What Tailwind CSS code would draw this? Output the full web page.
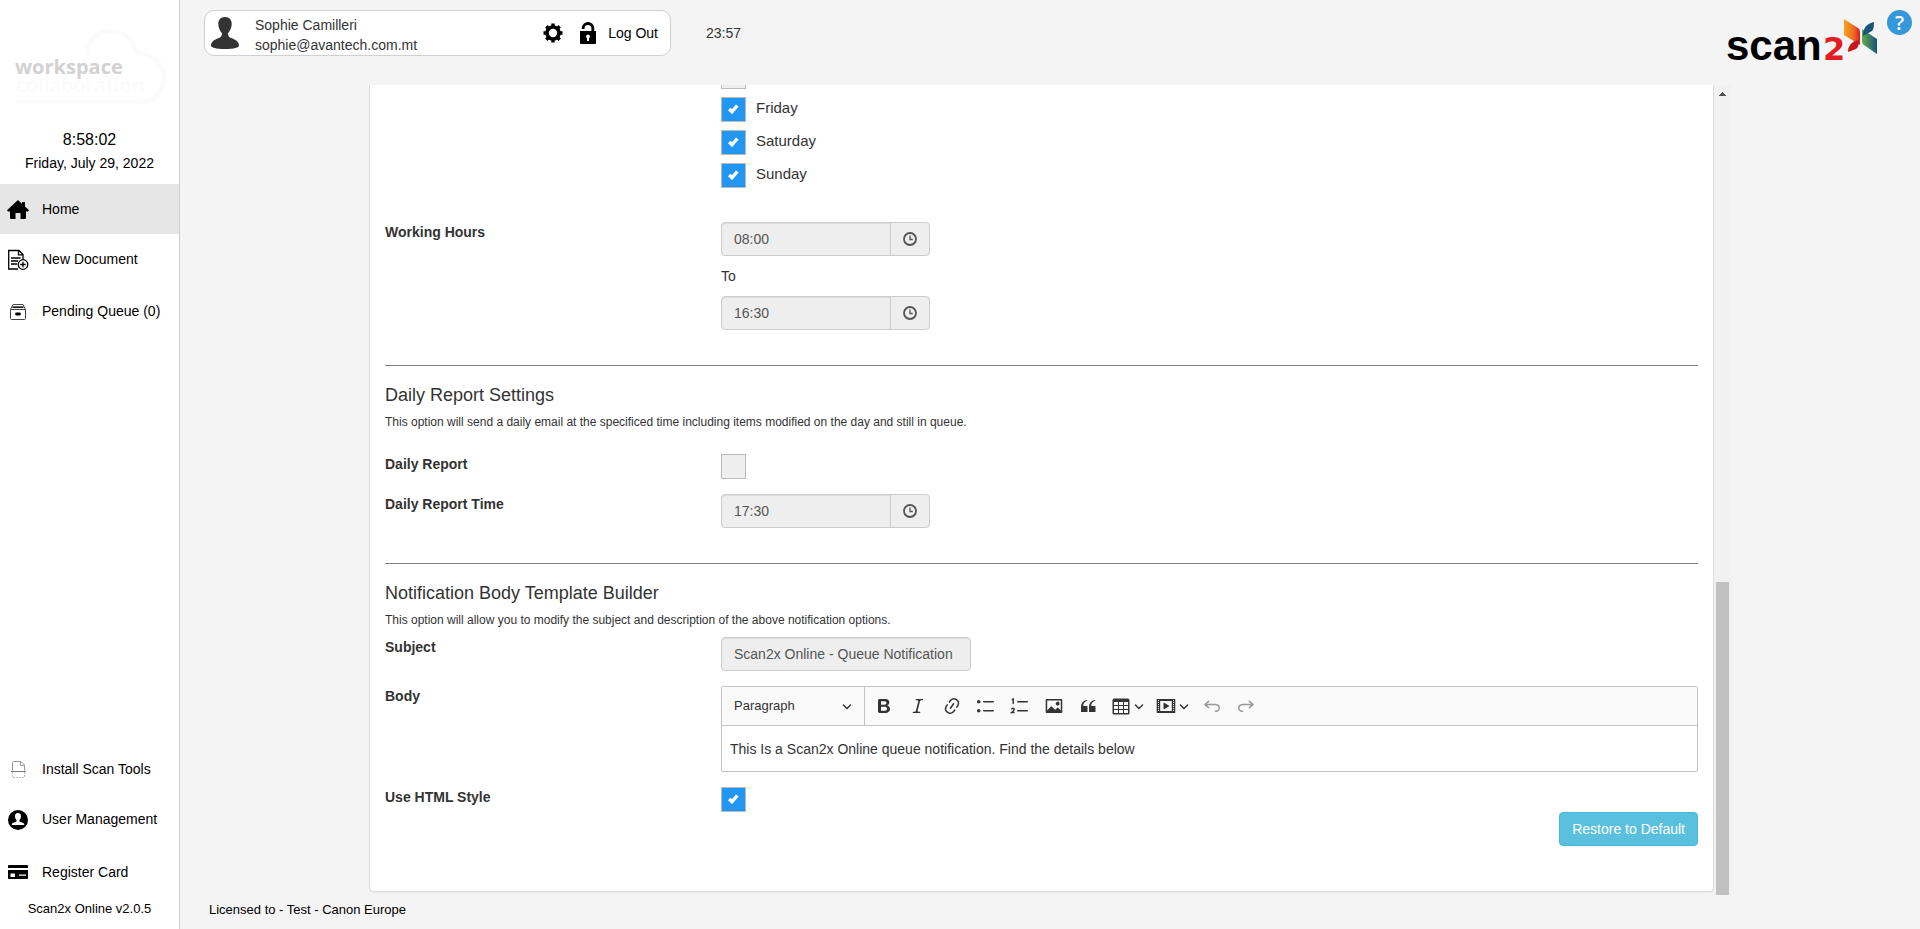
<!DOCTYPE html>
<html lang="en">
<head>
<meta charset="utf-8">
<meta name="viewport" content="width=device-width, initial-scale=1">
<title>Scan2x Online</title>
<script src="https://cdn.jsdelivr.net/npm/@tailwindcss/browser@4"></script>
</head>
<body class="flex h-screen overflow-hidden bg-[#f4f4f4] font-['Liberation_Sans',Arial,sans-serif] text-sm leading-5 text-[#333]">

<!-- Shared symbols -->
<svg class="hidden" aria-hidden="true">
  <symbol id="check" viewBox="0 0 25 25"><path d="M8.200 12l2.800 2.800 5.300-6.300" fill="none" stroke="#fff" stroke-width="3.400"/></symbol>
  <symbol id="clock" viewBox="0 0 14 14"><circle cx="7" cy="7" r="6" fill="none" stroke="#555" stroke-width="1.800"/><path d="M7 3.500V7.500H9.800" fill="none" stroke="#555" stroke-width="1.300"/></symbol>
  <symbol id="chevron" viewBox="0 0 10 10"><path fill="#333" d="M.941 4.523a.75.75 0 1 1 1.060-1.060l3.006 3.005 3.005-3.005a.75.75 0 1 1 1.060 1.060l-3.549 3.550a.75.75 0 0 1-1.168-.136L.941 4.523z"/></symbol>
</svg>

<aside class="flex w-[180px] shrink-0 flex-col border-r border-[#ccc] bg-white text-black">
  <div class="flex h-[130px] items-center pt-2 pl-2">
    <svg class="h-[92px] w-[164px]" viewBox="0 0 164 92" role="img" aria-label="workspace collaboration">
      <path d="M79 32C80 18 88 8 102 8c14 0 23 9 27 22 16 1 27 11 27 25 0 14-10 24-25 24H8" fill="none" stroke="#fbfbfb" stroke-width="5"/>
      <text x="7" y="51" font-family="Open Sans, sans-serif" font-weight="700" font-size="20" fill="#d3d1d1">workspace</text>
      <text x="8" y="69" font-family="Open Sans, sans-serif" font-weight="600" font-size="20" fill="#fbfbfb">collaboration</text>
    </svg>
  </div>
  <div class="flex h-[54px] flex-col items-center">
    <time class="text-base leading-5">8:58:02</time>
    <time class="pt-[3px]">Friday, July 29, 2022</time>
  </div>
  <nav class="flex flex-col">
    <a href="#" class="flex h-[50px] items-center bg-[#e6e6e6] pl-[7px]">
      <svg class="mr-[13px] size-[22px]" viewBox="0 0 22 22"><path d="M11 2L0 12.200l1 1.200h2V20q0 1 1 1h4.500v-6h5v6H18q1 0 1-1v-6.600h2l1-1.200-4-3.700V4h-3v1.700z"/></svg>Home</a>
    <a href="#" class="flex h-[50px] items-center pl-[7px]">
      <svg class="mr-[13px] size-[22px]" viewBox="0 0 22 22" fill="none" stroke="#000" stroke-width="1.300"><path d="M11 21H1.700V2.500H12l4 4v5M11.500 2.500v4.300H16M4 10h9.500M4 13h7M4 16h6"/><circle cx="16" cy="16.500" r="4.800"/><path d="M16 13.700v5.600M13.200 16.500h5.600"/></svg>New Document</a>
    <a href="#" class="flex h-[54px] items-center pl-[7px]">
      <svg class="mr-[13px] size-[22px]" viewBox="0 0 22 22" fill="none" stroke="#444"><path d="M3.500 9.500h15v9q0 1-1 1h-13q-1 0-1-1zM3.500 9.500l2.500-5h10l2.500 5"/><path d="M5.500 7.200h11" stroke="#222" stroke-width="1.800"/><path d="M9.500 14h3" stroke="#000" stroke-width="2.800" stroke-linecap="round"/></svg>Pending Queue (0)</a>
  </nav>
  <nav class="mt-auto flex flex-col">
    <a href="#" class="flex h-[50px] items-center pl-[7px]">
      <svg class="mr-[13px] size-[22px]" viewBox="0 0 22 22" fill="none" stroke="#999"><path d="M5.500 12.500V4.500q0-1 1-1h7.500l3.500 3.500v5.500M13.500 3.500v4h4"/><path d="M4 13.500h15" stroke="#777"/><path d="M5.500 14v5.500h12V14" stroke="#bbb" stroke-dasharray="2 1"/></svg>Install Scan Tools</a>
    <a href="#" class="flex h-[50px] items-center pl-[7px]">
      <svg class="mr-[13px] size-[22px]" viewBox="0 0 22 22"><circle cx="11" cy="12" r="10"/><path fill="#fff" d="M11 5c-2.200 0-3.200 1.600-3 3.700.1 1.500.8 2.500 1.500 3.200v1.600L5.700 15q-1 .5-1 2h12.600q0-1.500-1-2l-3.800-1.500v-1.600c.7-.7 1.400-1.700 1.500-3.200.2-2.100-.8-3.700-3-3.700z"/></svg>User Management</a>
    <a href="#" class="flex h-[54px] items-center pt-[2px] pl-[7px]">
      <svg class="mr-[13px] size-[22px]" viewBox="0 0 22 22"><path d="M1 5q0-1 1-1h18q1 0 1 1v2H1zM1 9h20v8q0 1-1 1H2q-1 0-1-1z"/><path fill="#fff" d="M3.500 12.500H8V16H3.500zM12 13.500h7v1.200h-7z"/></svg>Register Card</a>
    <p class="h-[31px] pt-px text-center text-[13px]">Scan2x Online v2.0.5</p>
  </nav>
</aside>

<div class="flex min-w-0 flex-1 flex-col">
  <header class="flex h-[85px] shrink-0 items-start pl-6">
    <div class="mt-[10px] flex h-[46px] w-[467px] items-center rounded-[10px] border border-[#d0d0d0] bg-white pr-3 pl-[5px]">
      <svg class="h-8 w-[30px]" viewBox="0 0 30 32" fill="#333"><path d="M15 0c-4.500 0-7 3-6.700 7.500.2 3.500 1.700 6.500 3.700 8.700 0 2.300-.7 3.800-2.500 4.500C5.500 22.200 1 24 1 28.500c0 2 5 3.500 14 3.500s14-1.500 14-3.500c0-4.500-4.500-6.300-8.500-7.800-1.800-.7-2.500-2.200-2.500-4.500 2-2.200 3.500-5.200 3.700-8.700C22 3 19.500 0 15 0z"/></svg>
      <div class="ml-[15px] flex-1 pt-[3px]">
        <p>Sophie Camilleri</p>
        <p>sophie@avantech.com.mt</p>
      </div>
      <button type="button" aria-label="Settings">
        <svg class="size-5" viewBox="0 0 20 20"><circle cx="10" cy="10" r="6" fill="none" stroke="#000" stroke-width="3.600"/><path d="M10 .5v4M10 15.500v4M.5 10h4M15.500 10h4M3.300 3.300L6 6M14 14l2.700 2.700M3.300 16.700L6 14M14 6l2.700-2.700" stroke="#000" stroke-width="3.400"/></svg>
      </button>
      <a href="#" class="ml-[17px] flex items-center gap-3 text-black">
        <svg class="h-[22px] w-4" viewBox="0 0 16 22"><path d="M3.200 7V6a4.800 4.500 0 0 1 9.600 0v4" fill="none" stroke="#000" stroke-width="2.800"/><path d="M0 9h16v12q0 1-1 1H1q-1 0-1-1z"/><path fill="#fff" d="M8 12.500a2 2 0 0 1 1 3.700V19H7v-2.800a2 2 0 0 1 1-3.700z"/></svg>Log Out</a>
    </div>
    <time class="mt-[23px] ml-[35px]">23:57</time>
    <svg class="mt-3 ml-auto h-[60px] w-[152px] overflow-visible" viewBox="0 -4 152 60" role="img" aria-label="scan2x">
      <defs>
        <linearGradient id="g1"><stop stop-color="#f9a51b"/><stop offset=".6" stop-color="#ee6a26"/><stop offset="1" stop-color="#d62027"/></linearGradient>
        <linearGradient id="g2"><stop stop-color="#5fae4a"/><stop offset="1" stop-color="#17537a"/></linearGradient>
      </defs>
      <text x="-1" y="44" font-family="Liberation Sans, Arial, sans-serif" font-weight="700" font-size="42" fill="#000">scan</text>
      <text x="96" y="44" font-family="DejaVu Sans, sans-serif" font-weight="700" font-size="32" fill="#e31b23">2</text>
      <path fill="url(#g1)" d="M117 3l14 9q2 1 2 4v13l-16-10z"/>
      <path fill="#c4161c" d="M132 24q0 7-3 9l-8 3q0-10 11-12z"/>
      <path fill="url(#g2)" d="M135 13l15 10v15l-13-9q-2-1-2-4z"/>
      <path fill="#1b5478" d="M147 6q0 8-2 9l-9 5q0-12 11-14z"/>
    </svg>
    <button type="button" aria-label="Help" class="mt-[10px] mr-2 ml-2 size-[25px] rounded-full bg-[#3498db] font-['Open_Sans',sans-serif] text-xl leading-6 font-semibold text-white">?</button>
  </header>

  <div class="flex min-h-0 flex-1 px-[189px]">
    <main class="flex min-w-0 flex-1 flex-col justify-end overflow-hidden pb-[3px]">
      <section class="rounded border border-[#ddd] bg-white px-[15px] pt-5 pb-[45px] shadow-[0_1px_1px_rgba(0,0,0,0.05)]">
        <fieldset class="ml-[336px] flex flex-col gap-2 text-[15px] leading-[22px]">
          <legend class="sr-only"></legend>
          <input type="checkbox" aria-label="Thursday" disabled class="size-[25px] appearance-none border border-[#bbb] bg-[#eee]">
          <label class="flex h-[25px] gap-[10px]"><span class="grid"><input type="checkbox" checked disabled class="col-start-1 row-start-1 size-[25px] appearance-none border border-[#bbb] bg-[#2196f3]"><svg class="pointer-events-none col-start-1 row-start-1 size-[25px]"><use href="#check"/></svg></span><span>Friday</span></label>
          <label class="flex h-[25px] gap-[10px]"><span class="grid"><input type="checkbox" checked disabled class="col-start-1 row-start-1 size-[25px] appearance-none border border-[#bbb] bg-[#2196f3]"><svg class="pointer-events-none col-start-1 row-start-1 size-[25px]"><use href="#check"/></svg></span><span>Saturday</span></label>
          <label class="flex h-[25px] gap-[10px]"><span class="grid"><input type="checkbox" checked disabled class="col-start-1 row-start-1 size-[25px] appearance-none border border-[#bbb] bg-[#2196f3]"><svg class="pointer-events-none col-start-1 row-start-1 size-[25px]"><use href="#check"/></svg></span><span>Sunday</span></label>
        </fieldset>

        <div class="mt-[34px] grid grid-cols-[336px_1fr]">
          <label for="from" class="font-bold">Working Hours</label>
          <div>
            <div class="flex h-[34px] w-[209px] rounded border border-[#ccc] bg-[#eee]">
              <input id="from" type="text" value="08:00" disabled class="min-w-0 flex-1 rounded-l px-3 text-[#555] shadow-[inset_0_1px_1px_rgba(0,0,0,0.075)]">
              <button type="button" aria-label="Pick start time" class="flex w-[39px] items-center justify-center border-l border-[#ccc]"><svg class="size-[14px]"><use href="#clock"/></svg></button>
            </div>
            <label for="until" class="my-[10px] block">To</label>
            <div class="flex h-[34px] w-[209px] rounded border border-[#ccc] bg-[#eee]">
              <input id="until" type="text" value="16:30" disabled class="min-w-0 flex-1 rounded-l px-3 text-[#555] shadow-[inset_0_1px_1px_rgba(0,0,0,0.075)]">
              <button type="button" aria-label="Pick end time" class="flex w-[39px] items-center justify-center border-l border-[#ccc]"><svg class="size-[14px]"><use href="#clock"/></svg></button>
            </div>
          </div>
        </div>

        <hr class="mt-[35px] border-[#808080]">
        <h2 class="mt-[19px] text-lg leading-5">Daily Report Settings</h2>
        <p class="mt-[7px] text-xs leading-5">This option will send a daily email at the specificed time including items modified on the day and still in queue.</p>
        <div class="mt-[22px] grid h-[25px] grid-cols-[336px_1fr]">
          <label for="daily" class="font-bold">Daily Report</label>
          <input id="daily" type="checkbox" disabled class="size-[25px] appearance-none border border-[#bbb] bg-[#eee]">
        </div>
        <div class="mt-[15px] grid grid-cols-[336px_1fr]">
          <label for="dailytime" class="font-bold">Daily Report Time</label>
          <div class="flex h-[34px] w-[209px] rounded border border-[#ccc] bg-[#eee]">
            <input id="dailytime" type="text" value="17:30" disabled class="min-w-0 flex-1 rounded-l px-3 text-[#555] shadow-[inset_0_1px_1px_rgba(0,0,0,0.075)]">
            <button type="button" aria-label="Pick report time" class="flex w-[39px] items-center justify-center border-l border-[#ccc]"><svg class="size-[14px]"><use href="#clock"/></svg></button>
          </div>
        </div>

        <hr class="mt-[35px] border-[#808080]">
        <h2 class="mt-[19px] text-lg leading-5">Notification Body Template Builder</h2>
        <p class="mt-[7px] text-xs leading-5">This option will allow you to modify the subject and description of the above notification options.</p>
        <div class="mt-[7px] grid grid-cols-[336px_1fr]">
          <label for="subject" class="font-bold">Subject</label>
          <input id="subject" type="text" value="Scan2x Online - Queue Notification" disabled class="h-[34px] w-[250px] rounded border border-[#ccc] bg-[#eee] px-3 text-[#555] shadow-[inset_0_1px_1px_rgba(0,0,0,0.075)]">
        </div>
        <div class="mt-[15px] grid grid-cols-[336px_1fr]">
          <label for="body" class="font-bold">Body</label>
          <div class="rounded-xs border border-[#c4c4c4]">
            <div class="flex h-[39px] items-center border-b border-[#c4c4c4] bg-[#fafafa]">
              <button type="button" class="flex h-full w-[143px] items-center justify-between border-r border-[#c4c4c4] pr-3 pl-3 text-[13px]">Paragraph<svg class="size-[10px]"><use href="#chevron"/></svg></button>
              <div class="flex items-center gap-[2px] pl-[3px]">
                <button type="button" aria-label="Bold" class="flex size-8 items-center justify-center"><svg class="size-5" viewBox="0 0 20 20" fill="#333"><path d="M10.187 17H5.773c-.637 0-1.092-.138-1.364-.415-.273-.277-.409-.718-.409-1.323V4.738c0-.617.14-1.062.419-1.332.279-.27.73-.406 1.354-.406h4.680c.69 0 1.288.041 1.793.124.506.083.96.242 1.360.478.341.197.644.447.906.75a3.262 3.262 0 0 1 .808 2.162c0 1.401-.722 2.426-2.167 3.075C15.050 10.175 16 11.315 16 13.010a3.756 3.756 0 0 1-2.296 3.504 6.100 6.100 0 0 1-1.517.377c-.571.073-1.238.11-2 .11zm-.217-6.217H7v4.087h3.069c1.977 0 2.965-.69 2.965-2.072 0-.707-.256-1.220-.768-1.537-.512-.319-1.277-.478-2.296-.478zM7 5.130v3.619h2.606c.729 0 1.292-.067 1.690-.2a1.600 1.600 0 0 0 .91-.765c.165-.267.247-.566.247-.897 0-.707-.26-1.176-.778-1.409-.519-.232-1.310-.348-2.375-.348H7z"/></svg></button>
                <button type="button" aria-label="Italic" class="flex size-8 items-center justify-center"><svg class="size-5" viewBox="0 0 20 20" fill="#333"><path d="m9.586 14.633.021.004c-.036.335.095.655.393.962.082.083.173.15.274.201h1.474a.6.6 0 1 1 0 1.200H5.304a.6.6 0 0 1 0-1.200h1.150c.474-.07.809-.182 1.005-.334.157-.122.291-.32.404-.597l2.416-9.550a1.053 1.053 0 0 0-.281-.823 1.120 1.120 0 0 0-.442-.296H8.150a.6.6 0 0 1 0-1.200h6.443a.6.6 0 1 1 0 1.200h-1.195c-.376.056-.65.155-.823.296-.215.175-.423.439-.623.79l-2.366 9.347z"/></svg></button>
                <button type="button" aria-label="Link" class="flex size-8 items-center justify-center"><svg class="size-5" viewBox="0 0 20 20" fill="#333"><path d="m11.077 15 .991-1.416a.75.75 0 1 1 1.229.86l-1.148 1.640a.748.748 0 0 1-.217.206 5.251 5.251 0 0 1-8.503-5.955.741.741 0 0 1 .12-.274l1.147-1.639a.75.75 0 1 1 1.228.86L4.933 10.700l.006.003a3.750 3.750 0 0 0 6.132 4.294l.006.004zm5.494-5.335a.748.748 0 0 1-.12.274l-1.147 1.639a.75.75 0 1 1-1.228-.86l.86-1.230a3.750 3.750 0 0 0-6.144-4.301l-.86 1.229a.75.75 0 0 1-1.229-.86l1.148-1.640a.748.748 0 0 1 .217-.206 5.251 5.251 0 0 1 8.503 5.955zm-4.563-2.532a.75.75 0 0 1 .184 1.045l-3.155 4.505a.75.75 0 1 1-1.229-.86l3.155-4.506a.75.75 0 0 1 1.045-.184z"/></svg></button>
                <button type="button" aria-label="Bulleted list" class="flex size-8 items-center justify-center"><svg class="size-5" viewBox="0 0 20 20" fill="#333"><path d="M7 5.750c0 .414.336.75.75.75h9.500a.75.75 0 1 0 0-1.500h-9.500a.75.75 0 0 0-.75.75zm-6 0C1 4.784 1.777 4 2.750 4c.966 0 1.750.777 1.750 1.750 0 .966-.777 1.750-1.750 1.750C1.784 7.500 1 6.723 1 5.750zm6 9c0 .414.336.75.75.75h9.500a.75.75 0 1 0 0-1.500h-9.500a.75.75 0 0 0-.75.75zm-6 0c0-.966.777-1.750 1.750-1.750.966 0 1.750.777 1.750 1.750 0 .966-.777 1.750-1.750 1.750-.966 0-1.750-.777-1.750-1.750z"/></svg></button>
                <button type="button" aria-label="Numbered list" class="flex size-8 items-center justify-center"><svg class="size-5" viewBox="0 0 20 20" fill="#333"><path d="M7 5.750c0 .414.336.75.75.75h9.500a.75.75 0 1 0 0-1.500h-9.500a.75.75 0 0 0-.75.75zm0 9c0 .414.336.75.75.75h9.500a.75.75 0 1 0 0-1.500h-9.500a.75.75 0 0 0-.75.75z"/><path d="M1.800 3.800l1.400-.8v5M1.500 13.500q.2-1.200 1.400-1.200 1.300 0 1.300 1.100 0 .8-2.600 3.100h2.900" fill="none" stroke="#333" stroke-width="1.400"/></svg></button>
                <button type="button" aria-label="Insert image" class="flex size-8 items-center justify-center"><svg class="size-5" viewBox="0 0 20 20" fill="#333"><path d="M6.910 10.540c.26-.23.64-.21.88.03l3.360 3.140 2.230-2.060a.64.64 0 0 1 .87 0l2.520 2.970V4.500H3.200v10.120l3.710-4.080zm10.270-7.510c.6 0 1.090.47 1.090 1.050v11.840c0 .59-.49 1.060-1.090 1.060H2.790c-.6 0-1.090-.47-1.090-1.060V4.080c0-.58.49-1.050 1.100-1.050h14.380zm-5.220 5.560a1.960 1.960 0 1 1 3.400-1.960 1.960 1.960 0 0 1-3.400 1.960z"/></svg></button>
                <button type="button" aria-label="Block quote" class="flex size-8 items-center justify-center"><svg class="size-5" viewBox="0 0 20 20" fill="#333"><path d="M3 10.423a6.500 6.500 0 0 1 6.056-6.408l.038.67C6.448 5.423 5.354 7.663 5.220 10H9c.552 0 .5.432.5.986v4.511c0 .554-.448.503-1 .503h-5c-.552 0-.5-.449-.5-1.003v-4.574zm8 0a6.500 6.500 0 0 1 6.056-6.408l.038.67c-2.646.739-3.740 2.979-3.873 5.315H17c.552 0 .5.432.5.986v4.511c0 .554-.448.503-1 .503h-5c-.552 0-.5-.449-.5-1.003v-4.574z"/></svg></button>
                <button type="button" aria-label="Insert table" class="flex h-8 w-[43px] items-center justify-center gap-[3px]"><svg class="size-5" viewBox="0 0 20 20" fill="#333"><path d="M3 6v3h4V6H3zm0 4v3h4v-3H3zm0 4v3h4v-3H3zm5 3h4v-3H8v3zm5 0h4v-3h-4v3zm4-4v-3h-4v3h4zm0-4V6h-4v3h4zm1.500 8a1.500 1.500 0 0 1-1.500 1.500H3A1.500 1.500 0 0 1 1.500 17V4c.222-.863 1.068-1.500 2-1.500h13c.932 0 1.778.637 2 1.500v13zM12 13v-3H8v3h4zm0-4V6H8v3h4z"/></svg><svg class="size-[10px]"><use href="#chevron"/></svg></button>
                <button type="button" aria-label="Insert media" class="flex h-8 w-[43px] items-center justify-center gap-[3px]"><svg class="size-5" viewBox="0 0 20 20" fill="#333"><path d="M18.680 3.030c.6 0 .59-.03.59.55v12.840c0 .59.01.56-.59.56H1.290c-.6 0-.59.03-.59-.56V3.580c0-.58-.01-.55.6-.55h17.380zM15.770 15V5H4.200v10h11.570zM2 4v1h1V4H2zm0 2v1h1V6H2zm0 2v1h1V8H2zm0 2v1h1v-1H2zm0 2v1h1v-1H2zm0 2v1h1v-1H2zM17 4v1h1V4h-1zm0 2v1h1V6h-1zm0 2v1h1V8h-1zm0 2v1h1v-1h-1zm0 2v1h1v-1h-1zm0 2v1h1v-1h-1zM7.500 7.177a.4.4 0 0 1 .593-.351l5.133 2.824a.4.4 0 0 1 0 .7l-5.133 2.824a.4.4 0 0 1-.593-.35V7.176v.001z"/></svg><svg class="size-[10px]"><use href="#chevron"/></svg></button>
                <button type="button" aria-label="Undo" disabled class="flex size-8 items-center justify-center"><svg class="size-5" viewBox="0 0 20 20" fill="#999"><path d="m5.042 9.367 2.189 1.837a.75.75 0 0 1-.965 1.149l-3.788-3.180a.747.747 0 0 1-.21-.284.75.75 0 0 1 .17-.945L6.230 4.762a.75.75 0 1 1 .964 1.150L4.863 7.866h8.917A.75.75 0 0 1 14 7.900a4 4 0 1 1-1.477 7.718l.344-1.489a2.500 2.500 0 1 0 1.094-4.730l.008-.032H5.042z"/></svg></button>
                <button type="button" aria-label="Redo" disabled class="flex size-8 items-center justify-center"><svg class="size-5" viewBox="0 0 20 20" fill="#999"><path transform="matrix(-1 0 0 1 20 0)" d="m5.042 9.367 2.189 1.837a.75.75 0 0 1-.965 1.149l-3.788-3.180a.747.747 0 0 1-.21-.284.75.75 0 0 1 .17-.945L6.230 4.762a.75.75 0 1 1 .964 1.150L4.863 7.866h8.917A.75.75 0 0 1 14 7.900a4 4 0 1 1-1.477 7.718l.344-1.489a2.500 2.500 0 1 0 1.094-4.730l.008-.032H5.042z"/></svg></button>
              </div>
            </div>
            <textarea id="body" rows="1" class="block h-[45px] w-full resize-none px-2 py-[13px] leading-5">This Is a Scan2x Online queue notification. Find the details below</textarea>
          </div>
        </div>
        <div class="mt-[15px] grid h-[25px] grid-cols-[336px_1fr]">
          <label for="html" class="font-bold">Use HTML Style</label>
          <span class="grid justify-start"><input id="html" type="checkbox" checked class="col-start-1 row-start-1 size-[25px] appearance-none border border-[#bbb] bg-[#2196f3]"><svg class="pointer-events-none col-start-1 row-start-1 size-[25px]"><use href="#check"/></svg></span>
        </div>
        <button type="button" class="ml-auto block h-[34px] rounded border border-[#46b8da] bg-[#5bc0de] px-3 text-white">Restore to Default</button>
      </section>
    </main>
    <div class="flex w-[17px] flex-col items-center bg-[#f1f1f1]" aria-hidden="true">
      <svg class="mt-[7px] h-1 w-[7px]" viewBox="0 0 7 4" fill="#505050"><path d="M3 0h1v1h1v1h1v1h1v1H0V3h1V2h1V1h1z"/></svg>
      <div class="mt-auto h-[313px] w-[13px] bg-[#c1c1c1]"></div>
    </div>
  </div>

  <footer class="h-[34px] shrink-0 px-[29px] pt-[5px] text-[13px] text-black">Licensed to - Test - Canon Europe</footer>
</div>
</body>
</html>
